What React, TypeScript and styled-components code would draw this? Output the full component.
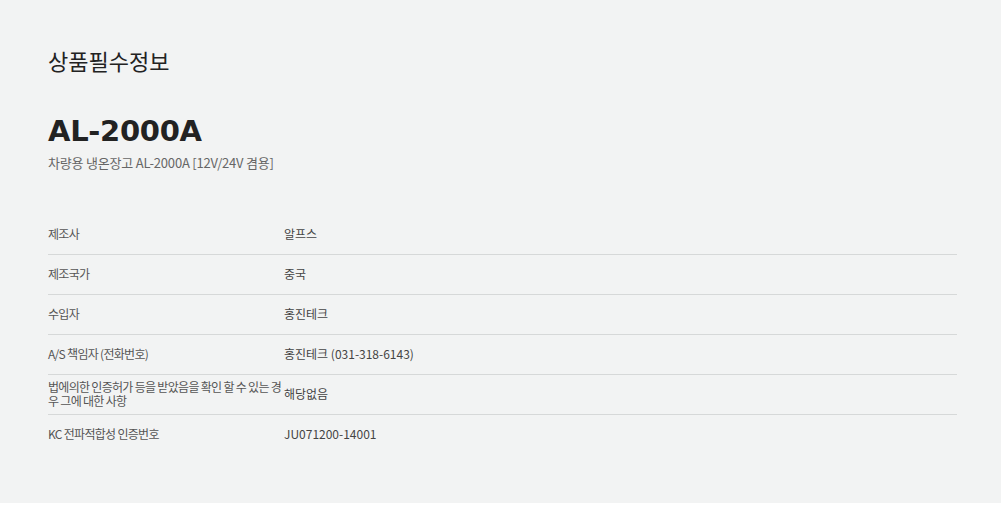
import React from 'react'
import styled, { createGlobalStyle } from 'styled-components'

const GlobalStyle = createGlobalStyle`
  html, body {
    margin: 0;
    padding: 0;
    background: #ffffff;
  }
  body {
    font-family: "Noto Sans CJK KR", "Noto Sans", sans-serif;
  }
`

const Wrapper = styled.section`
  box-sizing: border-box;
  height: 503px;
  padding: 44px 44px 0 48px;
  background-color: #f2f3f3;
`

const Title = styled.h2`
  margin: 0;
  font-size: 22px;
  line-height: 32px;
  font-weight: 400;
  color: #222222;
`

const ModelName = styled.h3`
  margin: 35px 0 0;
  font-family: "DejaVu Sans", sans-serif;
  font-size: 29px;
  line-height: 40px;
  font-weight: 700;
  letter-spacing: -0.3px;
  color: #222222;
`

const Subtitle = styled.p`
  margin: 2px 0 0;
  font-size: 13px;
  line-height: 20px;
  letter-spacing: -0.2px;
  color: #666666;
`

const Table = styled.div`
  margin-top: 42px;
  display: flex;
  flex-direction: column;
`

const Row = styled.div`
  display: grid;
  grid-template-columns: 236px 1fr;
  align-items: center;
  height: 40px;
  padding-bottom: 2px;
  box-sizing: border-box;
  border-bottom: 1px solid #d6d8d8;

  &:last-child {
    border-bottom: none;
  }
`

const Label = styled.div`
  font-size: 12px;
  line-height: 14px;
  letter-spacing: -0.7px;
  word-break: break-all;
  color: #555555;
`

const Value = styled.div`
  font-size: 12px;
  line-height: 14px;
  color: #444444;
`

const rows: [string, string][] = [
  ['제조사', '알프스'],
  ['제조국가', '중국'],
  ['수입자', '홍진테크'],
  ['A/S 책임자 (전화번호)', '홍진테크 (031-318-6143)'],
  ['법에의한 인증허가 등을 받았음을 확인 할 수 있는 경우 그에 대한 사항', '해당없음'],
  ['KC 전파적합성 인증번호', 'JU071200-14001'],
]

export default function App() {
  return (
    <>
      <GlobalStyle />
      <Wrapper>
        <Title>상품필수정보</Title>
        <ModelName>AL-2000A</ModelName>
        <Subtitle>차량용 냉온장고 AL-2000A [12V/24V 겸용]</Subtitle>
        <Table>
          {rows.map(([label, value]) => (
            <Row key={label}>
              <Label>{label}</Label>
              <Value>{value}</Value>
            </Row>
          ))}
        </Table>
      </Wrapper>
    </>
  )
}
